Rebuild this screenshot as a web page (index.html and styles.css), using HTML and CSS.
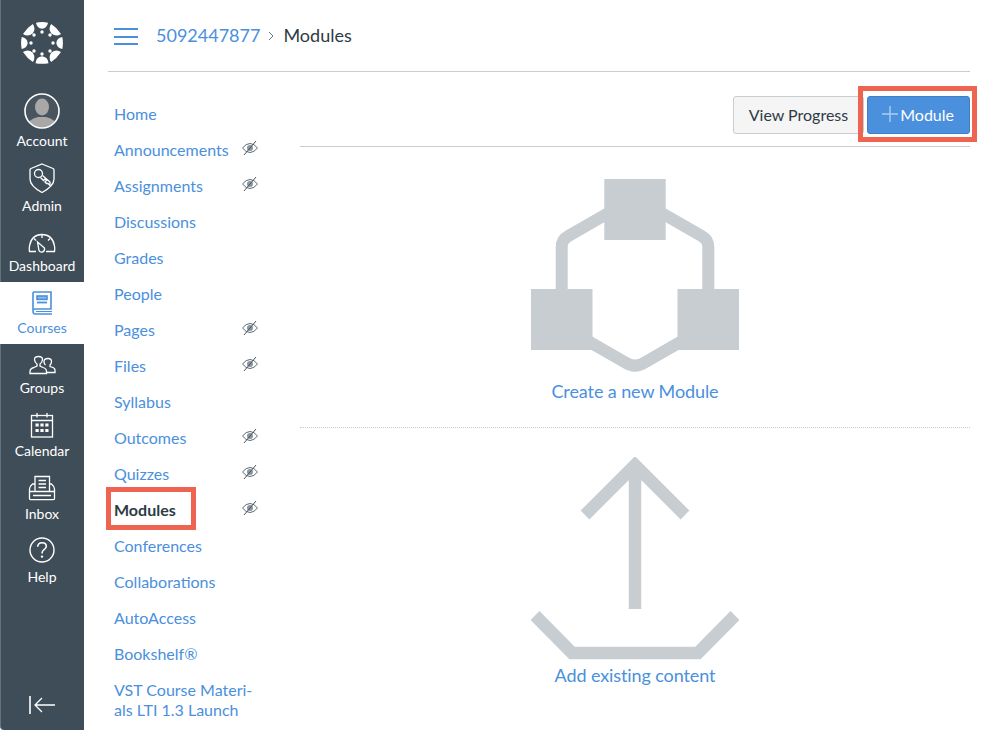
FILE: index.html
```html
<!DOCTYPE html>
<html lang="en">
<head>
<meta charset="utf-8">
<title>Modules</title>
<link rel="stylesheet" href="styles.css">
</head>
<body>
<div class="app">
  <nav class="global-nav">
    <a class="logo" href="#">
      <svg width="42" height="42" viewBox="-21 -21 42 42" fill="#fff">
        <path d="M-6 -20.300Q0 -21.500 6 -20.300Q5 -14.800 0 -14.300Q-5 -14.800 -6 -20.300Z"/>
        <path transform="rotate(180)" d="M-6.500 -20.200Q0 -21.500 6.500 -20.200Q6 -14 0 -13.300Q-6 -14 -6.500 -20.200Z"/>
        <path transform="rotate(90)" d="M-6 -20.300Q0 -21.500 6 -20.300Q5 -14.800 0 -14.300Q-5 -14.800 -6 -20.300Z"/>
        <path transform="rotate(270)" d="M-6 -20.300Q0 -21.500 6 -20.300Q5 -14.800 0 -14.300Q-5 -14.800 -6 -20.300Z"/>
        <path transform="rotate(45)" d="M-7 -19.900Q0 -21.500 7 -19.900Q6 -14.300 0 -13.300Q-6 -14.300 -7 -19.900Z"/>
        <path transform="rotate(135)" d="M-7 -19.900Q0 -21.500 7 -19.900Q6 -14.300 0 -13.300Q-6 -14.300 -7 -19.900Z"/>
        <path transform="rotate(225)" d="M-7 -19.900Q0 -21.500 7 -19.900Q6 -14.300 0 -13.300Q-6 -14.300 -7 -19.900Z"/>
        <path transform="rotate(315)" d="M-7 -19.900Q0 -21.500 7 -19.900Q6 -14.300 0 -13.300Q-6 -14.300 -7 -19.900Z"/>
        <circle cx="0" cy="-11" r="1.700"/>
        <circle cx="0" cy="11" r="1.700"/>
        <circle cx="-11" cy="0" r="1.700"/>
        <circle cx="11" cy="0" r="1.700"/>
        <circle cx="-8" cy="-8" r="1.700"/>
        <circle cx="8" cy="-8" r="1.700"/>
        <circle cx="-8" cy="8" r="1.700"/>
        <circle cx="8" cy="8" r="1.700"/>
      </svg>
    </a>
    <a class="nav-item h-account" href="#">
      <svg class="avatar" width="36" height="36" viewBox="0 0 36 36">
        <defs><clipPath id="av"><circle cx="18" cy="18" r="16.500"/></clipPath></defs>
        <circle cx="18" cy="18" r="16.500" fill="#48555f"/>
        <g clip-path="url(#av)" fill="#a8a8a8">
          <ellipse cx="18" cy="14" rx="7" ry="8.500"/>
          <path d="M3 36Q3 26 14 24H22Q33 26 33 36Z"/>
        </g>
        <circle cx="18" cy="18" r="17" fill="none" stroke="#fff" stroke-width="1.600"/>
      </svg>
      <span class="nav-label">Account</span>
    </a>
    <a class="nav-item h-admin" href="#">
      <svg class="nav-icon" width="30" height="30" viewBox="0 0 30 30" fill="none" stroke="#fff" stroke-width="1.300">
        <path d="M15 1L26 5.500Q27 6 27 7V16Q27 23 15 29.500Q3 23 3 16V7Q3 6 4 5.500Z"/>
        <circle cx="11.500" cy="10.500" r="4"/>
        <path d="M13.500 14.500L16.500 17.500L18 16L19.500 17.500L18 19L19.500 20.500L21 20.500L23 22.500L23 19L15.500 12.500"/>
      </svg>
      <span class="nav-label">Admin</span>
    </a>
    <a class="nav-item h-dashboard" href="#">
      <svg class="nav-icon" width="30" height="30" viewBox="0 0 30 30" fill="none" stroke="#fff" stroke-width="1.300">
        <path d="M9 23.500H2.500Q2 21 2.500 18Q4.500 6.500 15 6.500Q25.500 6.500 27.500 18Q28 21 27.500 23.500H19"/>
        <path d="M10.500 14L17.500 20Q18 23 15.500 24Q13 24.500 12 22.500Z"/>
        <path d="M15 7V10M7 10.500L9 12.500M23 10.500L21 12.500"/>
      </svg>
      <span class="nav-label">Dashboard</span>
    </a>
    <a class="nav-item h-courses is-active" href="#">
      <svg class="nav-icon" width="30" height="30" viewBox="0 0 30 30" fill="none" stroke="#4a90dd" stroke-width="1.600">
        <path d="M6 22V5Q6 4 7 4H24V21H8Q6 21 6 23Q6 26 8 26H25"/>
        <rect x="10" y="8" width="10" height="3.400" fill="#8dbbec"/>
        <path d="M10 14.500H20" stroke-width="1.800"/>
        <path d="M9 23.500H25" stroke-width="1"/>
      </svg>
      <span class="nav-label">Courses</span>
    </a>
    <a class="nav-item h-groups" href="#">
      <svg class="nav-icon" width="30" height="30" viewBox="0 0 30 30" fill="none" stroke="#fff" stroke-width="1.300">
        <path d="M3 23.500V21.500Q3 18.500 7 17.500L10 16V14Q7.500 12 7.500 9.500Q7.500 6.500 11.500 6.500Q15.500 6.500 15.500 9.500Q15.500 12 13 14V16L16 17.500Q19.500 18.500 19.500 21.500V23.500Z"/>
        <path d="M18.500 15Q17 14 17 11.500Q17 8.500 21 8.500Q24.500 8.500 24.500 11.500Q24.500 14 23 15V16.500L26 17.500Q28 18.500 28 20V22.500H20"/>
      </svg>
      <span class="nav-label">Groups</span>
    </a>
    <a class="nav-item h-calendar" href="#">
      <svg class="nav-icon" width="30" height="30" viewBox="0 0 30 30" fill="none" stroke="#fff" stroke-width="1.300">
        <rect x="4.500" y="5.500" width="21" height="21.500"/>
        <path d="M4.500 10.500H25.500M10 3V7.500M20 3V7.500"/>
        <g fill="#fff" stroke="none">
          <rect x="8.500" y="13.500" width="3.200" height="3"/><rect x="13.400" y="13.500" width="3.200" height="3"/><rect x="18.300" y="13.500" width="3.200" height="3"/>
          <rect x="8.500" y="19" width="3.200" height="3"/><rect x="13.400" y="19" width="3.200" height="3"/><rect x="18.300" y="19" width="3.200" height="3"/>
        </g>
      </svg>
      <span class="nav-label">Calendar</span>
    </a>
    <a class="nav-item h-inbox" href="#">
      <svg class="nav-icon" width="30" height="30" viewBox="0 0 30 30" fill="none" stroke="#fff" stroke-width="1.300">
        <path d="M8 18V3.500H22.500V18"/>
        <path d="M11.500 7.500H19M11.500 11H19M11.500 14.500H19" stroke-width="1.500"/>
        <path d="M8 11H5.500Q3 13 2.500 16V25.500Q2.500 26.700 4 26.700H26Q27.500 26.700 27.500 25.500V16Q27 13 24.500 11H22.500"/>
        <path d="M3 18.500H27M6 22.500H24"/>
      </svg>
      <span class="nav-label">Inbox</span>
    </a>
    <a class="nav-item h-help" href="#">
      <svg class="nav-icon" width="30" height="30" viewBox="0 0 30 30" fill="none" stroke="#fff" stroke-width="1.400">
        <circle cx="15" cy="15" r="12"/>
        <path d="M10.700 11.800Q11 7.800 15 7.800Q19.300 7.800 19.300 11.300Q19.300 13.300 17 14.700Q15 16 15 18.600" stroke-width="1.600"/>
        <circle cx="15" cy="21.600" r="1.200" fill="#fff" stroke="none"/>
      </svg>
      <span class="nav-label">Help</span>
    </a>
    <a class="collapse" href="#">
      <svg width="26" height="18" viewBox="0 0 26 18" fill="none" stroke="#fff" stroke-width="1.300">
        <path d="M1 0V18" stroke-width="1.600"/>
        <path d="M26 9H6M13 2L6 9L13 16"/>
      </svg>
    </a>
  </nav>

  <div class="main">
    <header class="topbar">
      <button class="hamburger" aria-label="Menu"><span></span><span></span><span></span></button>
      <div class="crumbs">
        <a class="crumb-link" href="#">5092447877</a>
        <svg class="crumb-sep" width="6" height="10" viewBox="0 0 6 10" fill="none" stroke="#6b7780" stroke-width="1"><path d="M1 1L5 5L1 9"/></svg>
        <span class="crumb-current">Modules</span>
      </div>
    </header>

    <div class="body-cols">
      <ul class="course-nav">
        <li class="course-row"><a href="#">Home</a></li>
        <li class="course-row"><a href="#">Announcements</a><svg class="eye"><use href="#eye"/></svg></li>
        <li class="course-row"><a href="#">Assignments</a><svg class="eye"><use href="#eye"/></svg></li>
        <li class="course-row"><a href="#">Discussions</a></li>
        <li class="course-row"><a href="#">Grades</a></li>
        <li class="course-row"><a href="#">People</a></li>
        <li class="course-row"><a href="#">Pages</a><svg class="eye"><use href="#eye"/></svg></li>
        <li class="course-row"><a href="#">Files</a><svg class="eye"><use href="#eye"/></svg></li>
        <li class="course-row"><a href="#">Syllabus</a></li>
        <li class="course-row"><a href="#">Outcomes</a><svg class="eye"><use href="#eye"/></svg></li>
        <li class="course-row"><a href="#">Quizzes</a><svg class="eye"><use href="#eye"/></svg></li>
        <li class="course-row is-current"><a href="#">Modules</a><svg class="eye"><use href="#eye"/></svg><span class="callout callout-nav"></span></li>
        <li class="course-row"><a href="#">Conferences</a></li>
        <li class="course-row"><a href="#">Collaborations</a></li>
        <li class="course-row"><a href="#">AutoAccess</a></li>
        <li class="course-row"><a href="#">Bookshelf®</a></li>
        <li class="course-row"><a href="#">VST Course Materi-<br>als LTI 1.3 Launch</a></li>
      </ul>

      <section class="content">
        <div class="toolbar">
          <button class="btn btn-default">View Progress</button>
          <span class="btn-wrap">
            <button class="btn btn-primary">
              <svg width="16" height="16" viewBox="0 0 16 16" stroke="#a9cdf2" stroke-width="1.400"><path d="M8 0V16M0 8H16"/></svg>
              Module
            </button>
            <span class="callout callout-btn"></span>
          </span>
        </div>

        <a class="empty empty-module" href="#">
          <svg width="210" height="196" viewBox="-1 0 210 196">
            <g fill="#c7cdd1">
              <rect x="73.300" y="0" width="61.400" height="61"/>
              <rect x="0" y="110" width="61.500" height="61"/>
              <rect x="146.500" y="110" width="61.500" height="61"/>
            </g>
            <path d="M30.700 110V68Q30.700 60.500 37 57.300L85 29.600M123 29.600L171 57.300Q177.300 60.500 177.300 68V110M50 158L94 183.300Q104 190 114 183.300L158 158" fill="none" stroke="#c7cdd1" stroke-width="12"/>
          </svg>
          <span class="empty-label">Create a new Module</span>
        </a>

        <a class="empty empty-add" href="#">
          <svg width="210" height="206" viewBox="-1 0 210 206" fill="none" stroke="#c7cdd1" stroke-width="12.500">
            <path d="M54 58L104 8L154 58M104 8V152"/>
            <path d="M4 158.500L41 196H167L204 158.500"/>
          </svg>
          <span class="empty-label">Add existing content</span>
        </a>
      </section>
    </div>
  </div>
</div>

<svg class="sprites" width="0" height="0" aria-hidden="true">
  <symbol id="eye" viewBox="0 0 16 16">
    <path d="M0.500 8Q4 3.500 8 3.500Q12 3.500 15.500 8Q12 12.500 8 12.500Q4 12.500 0.500 8Z" fill="none" stroke="#5c6a75" stroke-width="1"/>
    <circle cx="8" cy="8" r="3" fill="#8b96a0"/>
    <path d="M2 15L14 1" stroke="#47525c" stroke-width="1"/>
  </symbol>
</svg>
</body>
</html>
```

FILE: styles.css
```css
* { box-sizing: border-box; }
html, body { margin: 0; height: 100%; }
body {
  font-family: "Lato", "Liberation Sans", sans-serif;
  color: #2d3b45;
  background: #fff;
  overflow: hidden;
}
a { color: #4a90dd; text-decoration: none; }
ul { list-style: none; margin: 0; padding: 0; }

.app { display: flex; height: 730px; }

.global-nav {
  flex: 0 0 84px;
  display: flex;
  flex-direction: column;
  background: #3f4d58;
  border-left: 1px solid #66737d;
  border-bottom-left-radius: 4px;
}
.logo { height: 84px; padding-top: 22px; display: flex; justify-content: center; align-items: flex-start; margin-left: -1px; }
.nav-item {
  display: flex;
  flex-direction: column;
  align-items: center;
  justify-content: flex-end;
  margin-left: -1px;
  padding-bottom: 8px;
  color: #fff;
}
.nav-label { font-size: 14px; line-height: 16px; }
.avatar { margin-bottom: 4px; }
.nav-icon { display: block; }
.h-account { height: 73px; }
.h-admin { height: 65px; }
.h-dashboard { height: 60px; }
.h-courses { height: 62px; background: #fff; color: #4a90dd; }
.h-groups { height: 60px; }
.h-calendar { height: 63px; }
.h-inbox { height: 63px; }
.h-help { height: 63px; }
.h-admin .nav-icon { margin-bottom: 5px; }
.h-dashboard .nav-icon { margin-bottom: 0; }
.h-courses .nav-icon { margin-bottom: 2px; }
.h-groups .nav-icon { margin-bottom: 0; }
.h-calendar .nav-icon { margin-bottom: 3px; }
.h-inbox .nav-icon { margin-bottom: 3px; }
.h-help .nav-icon { margin-bottom: 4px; }
.collapse { margin-top: auto; margin-bottom: 16px; display: flex; justify-content: center; margin-left: -1px; }

.main { flex: 1; min-width: 0; padding: 0 24px; }

.topbar {
  height: 72px;
  display: flex;
  align-items: center;
  padding-left: 6px;
  border-bottom: 1px solid #c7cdd1;
}
.hamburger {
  width: 24px;
  height: 17px;
  padding: 0;
  border: 0;
  margin-top: 2px;
  background: none;
  display: flex;
  flex-direction: column;
  justify-content: space-between;
  margin-right: 18px;
}
.hamburger span { display: block; height: 2px; background: #4a90dd; }
.crumbs { display: flex; align-items: center; font-size: 18px; line-height: 24px; margin-top: -2px; }
.crumb-sep { margin: 2px 9px 0 8px; }
.crumb-current { color: #2d3b45; }

.body-cols { display: flex; }
.course-nav { flex: 0 0 192px; padding-top: 24px; }
.course-row {
  display: flex;
  justify-content: space-between;
  align-items: flex-start;
  position: relative;
  padding: 8px 42px 8px 6px;
  font-size: 16px;
  line-height: 20px;
}
.eye { width: 16px; height: 16px; flex: none; margin-top: 0; }
.is-current a { color: #2d3b45; font-weight: 700; }

.callout { position: absolute; border: 5px solid #ef6351; pointer-events: none; }
.callout-nav { left: -2px; top: -5px; width: 90px; height: 43px; }

.content { flex: 1; min-width: 0; padding-top: 24px; }
.toolbar {
  display: flex;
  justify-content: flex-end;
  padding-bottom: 12px;
  border-bottom: 1px solid #c7cdd1;
}
.btn {
  font: inherit;
  font-size: 16px;
  height: 38px;
  border-radius: 3px;
  padding: 0 15px 2px 14px;
  border: 1px solid #c7cdd1;
}
.btn-default { background: #f5f5f5; color: #2d3b45; margin-right: 3px; padding: 0 15px 2px; }
.btn-wrap { position: relative; display: block; }
.btn-primary {
  display: flex;
  align-items: center;
  gap: 2px;
  background: #4a90dd;
  border-color: #3f7fc6;
  color: #fff;
}
.callout-btn { left: -9px; top: -10px; right: -7px; bottom: -8px; }

.empty { display: flex; flex-direction: column; align-items: center; }
.empty-module { padding-top: 32px; height: 281px; border-bottom: 1px dotted #c7cdd1; }
.empty-add { padding-top: 29px; }
.empty-label { font-size: 18px; line-height: 24px; letter-spacing: -0.1px; }
.empty-module .empty-label { margin-top: 4px; }
.sprites { position: absolute; }
```
